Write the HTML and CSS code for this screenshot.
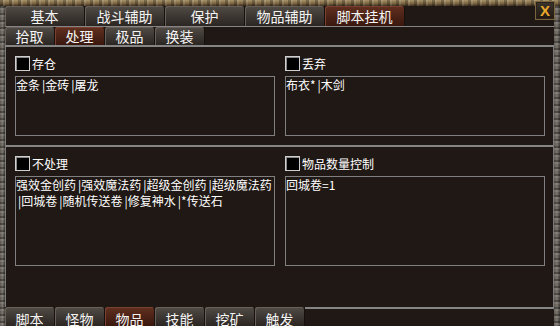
FILE: index.html
```html
<!DOCTYPE html>
<html lang="zh">
<head>
<meta charset="utf-8">
<link rel="stylesheet" href="styles.css">
</head>
<body>
<div class="window">
  <div class="top-edge"></div>
  <div class="middle">
    <div class="edge edge-left"></div>
    <div class="panel">
      <div class="tabs tabs-main">
        <div class="tab">基本</div>
        <div class="tab">战斗辅助</div>
        <div class="tab">保护</div>
        <div class="tab">物品辅助</div>
        <div class="tab active">脚本挂机</div>
        <div class="tab-rest"></div>
      </div>
      <div class="rule thin"></div>
      <div class="tabs tabs-sub">
        <div class="tab">拾取</div>
        <div class="tab active">处理</div>
        <div class="tab">极品</div>
        <div class="tab">换装</div>
        <div class="tab-rest"></div>
      </div>
      <div class="rule"></div>
      <div class="content">
        <div class="section section-top">
          <div class="group">
            <div class="check"><span class="box"></span>存仓</div>
            <div class="field">金条<span class="sep">|</span>金砖<span class="sep">|</span>屠龙</div>
          </div>
          <div class="group">
            <div class="check"><span class="box"></span>丢弃</div>
            <div class="field">布衣*<span class="sep">|</span>木剑</div>
          </div>
        </div>
        <div class="rule"></div>
        <div class="section section-bottom">
          <div class="group">
            <div class="check"><span class="box"></span>不处理</div>
            <div class="field tall">强效金创药<span class="sep">|</span>强效魔法药<span class="sep">|</span>超级金创药<span class="sep">|</span>超级魔法药<br><span class="sep">|</span>回城卷<span class="sep">|</span>随机传送卷<span class="sep">|</span>修复神水<span class="sep">|</span>*传送石</div>
          </div>
          <div class="group">
            <div class="check"><span class="box"></span>物品数量控制</div>
            <div class="field tall">回城卷=1</div>
          </div>
        </div>
      </div>
      <div class="footer">
        <div class="tabs tabs-foot">
          <div class="tab">脚本</div>
          <div class="tab">怪物</div>
          <div class="tab active">物品</div>
          <div class="tab">技能</div>
          <div class="tab">挖矿</div>
          <div class="tab">触发</div>
        </div>
        <div class="foot-rest"></div>
      </div>
    </div>
    <div class="edge edge-right"></div>
  </div>
  <div class="close">X</div>
</div>
</body>
</html>
```

FILE: styles.css
```css
* { box-sizing: border-box; }
html, body {
  margin: 0;
  padding: 0;
  background: #1f1814;
}
body {
  width: 560px;
  height: 326px;
  overflow: hidden;
  font-family: "Noto Sans CJK SC", "Liberation Sans", sans-serif;
  color: #ffffff;
}
.window {
  position: relative;
  width: 560px;
  height: 326px;
  display: flex;
  flex-direction: column;
}
.top-edge {
  height: 6px;
  background:
    repeating-linear-gradient(90deg, rgba(0,0,0,0.25) 0 3px, rgba(255,255,255,0.1) 3px 5px, rgba(0,0,0,0) 5px 9px),
    linear-gradient(#a8946a, #786240 60%, #3a2e20);
}
.middle {
  flex: 1;
  display: flex;
  min-height: 0;
}
.edge {
  background:
    repeating-linear-gradient(180deg, rgba(0,0,0,0.3) 0 2px, rgba(255,255,255,0.1) 2px 4px, rgba(0,0,0,0) 4px 7px),
    linear-gradient(90deg, #5c5852, #7a746c 50%, #3e3a36);
}
.edge-left { width: 5px; }
.edge-right { width: 6px; }
.panel {
  flex: 1;
  display: flex;
  flex-direction: column;
  background: #1f1814;
  min-width: 0;
}
.tabs {
  display: flex;
}
.tab {
  flex: none;
  text-align: center;
  color: #f4f4f4;
  font-size: 14px;
  background: linear-gradient(#524c47, #3c3632 55%, #2c2622);
  border-right: 1px solid #16110e;
  border-radius: 3px 3px 0 0;
  box-shadow: inset 1px 1px 0 #686058;
  overflow: hidden;
}
.tab.active {
  background: linear-gradient(#62301f, #4a2216 55%, #3a170e);
  box-shadow: inset 1px 1px 0 #7a4030;
}
.tab-rest { flex: 1; }
.tabs-main { height: 20px; }
.tabs-main .tab { width: 80px; height: 20px; line-height: 20px; }
.tabs-sub { height: 18px; }
.tabs-sub .tab { width: 50px; height: 18px; line-height: 18px; }
.rule {
  height: 2px;
  background: #858585;
  flex: none;
}
.rule.thin { height: 1px; }
.content {
  flex: 1;
  display: flex;
  flex-direction: column;
  border-left: 1px solid #7a7a7a;
  border-right: 1px solid #7a7a7a;
  min-height: 0;
}
.section {
  display: grid;
  grid-template-columns: 260px 260px;
  column-gap: 10px;
  padding: 9px 8px 0 9px;
}
.section-top { height: 98px; }
.section-bottom { flex: 1; }
.group {
  display: flex;
  flex-direction: column;
  gap: 5px;
}
.check {
  display: flex;
  align-items: center;
  gap: 2px;
  height: 15px;
  font-size: 12px;
  line-height: 15px;
  color: #ffffff;
}
.box {
  width: 15px;
  height: 15px;
  background: #000;
  border: 1px solid #cfcfcf;
  box-shadow: inset 1px 1px 0 #8a8a8a;
  flex: none;
}
.field {
  height: 60px;
  border: 1px solid #808080;
  font-size: 12px;
  line-height: 16px;
  padding: 0;
  color: #ffffff;
  white-space: nowrap;
  overflow: hidden;
}
.sep {
  padding: 0 0 0 2px;
}
.field.tall { height: 90px; }
.footer {
  display: flex;
  height: 19px;
  flex: none;
}
.tabs-foot .tab {
  width: 50px;
  height: 19px;
  line-height: 19px;
  padding-top: 3px;
}
.foot-rest {
  flex: 1;
  border-top: 2px solid #858585;
}
.close {
  position: absolute;
  top: 1px;
  right: 5px;
  width: 20px;
  height: 19px;
  background: linear-gradient(#3c342c, #1e1812);
  border: 1px solid #7a6440;
  box-shadow: inset 0 0 0 1px #2a2218;
  color: #e8a82a;
  font-family: "Liberation Sans", sans-serif;
  font-weight: bold;
  font-size: 15px;
  line-height: 17px;
  text-align: center;
}
```
